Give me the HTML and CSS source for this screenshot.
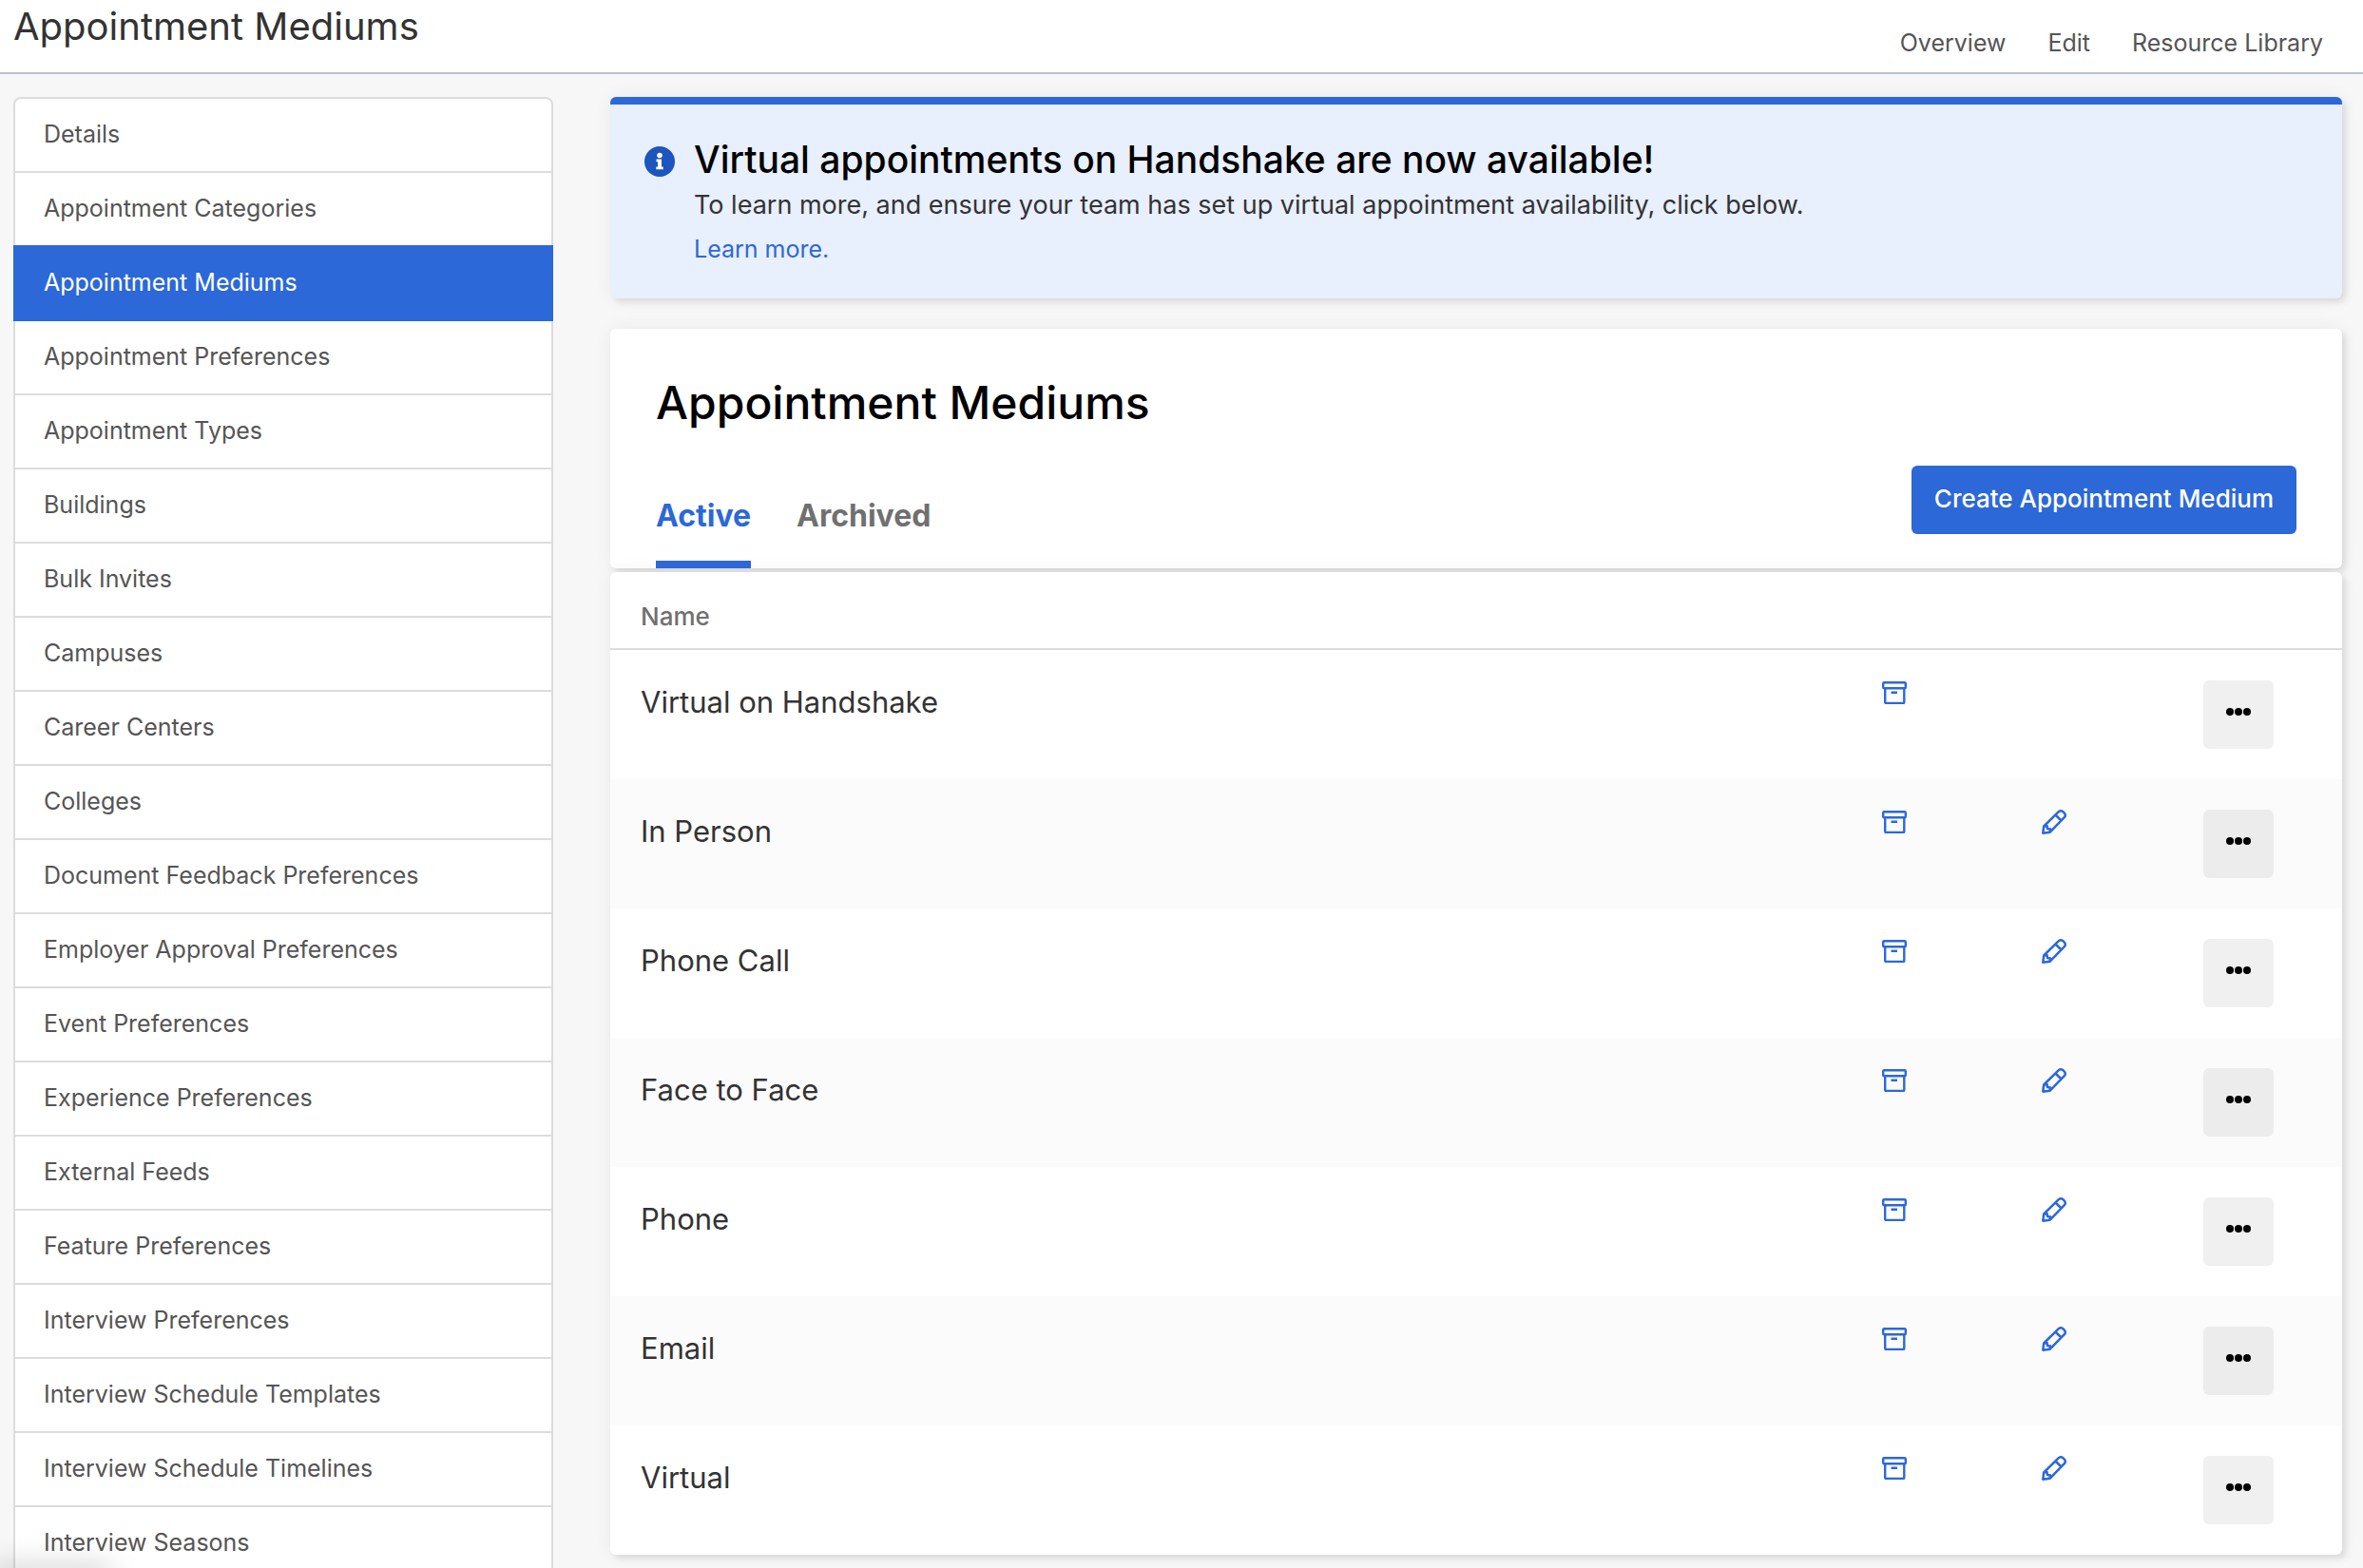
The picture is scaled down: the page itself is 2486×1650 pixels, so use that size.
FILE: index.html
```html
<!DOCTYPE html>
<html lang="en">
<head>
<meta charset="utf-8">
<title>Appointment Mediums</title>
<link rel="stylesheet" href="styles.css">
</head>
<body>
<svg class="sprite" aria-hidden="true">
  <symbol id="archive" viewBox="0 0 26 24">
    <g stroke-width="2.400">
      <rect x="1.200" y="1.200" width="23.600" height="6" rx="1"/>
      <path d="M3.200 7V22a1 1 0 0 0 1 1H22.300a1 1 0 0 0 1-1V7M9.500 11.800H16"/>
    </g>
  </symbol>
  <symbol id="pencil" viewBox="0 0 26 26">
    <path stroke-width="2.500" d="M1.300 24.700 2.200 17.500 17.800 2.200a3.200 3.200 0 0 1 4.600 0L23.800 3.600a3.200 3.200 0 0 1 0 4.600L8.500 23.800ZM14.500 5.500 20.500 11.500M2.500 17.500 5.500 17 6 20 9 20.500 8.500 23.500"/>
  </symbol>
  <symbol id="dots" viewBox="0 0 26 8">
    <circle cx="4" cy="4" r="4"/><circle cx="13" cy="4" r="4"/><circle cx="22" cy="4" r="4"/>
  </symbol>
</svg>

<header class="topbar">
  <h1 class="topbar-title">Appointment Mediums</h1>
  <nav class="topbar-nav" aria-label="Page">
    <a href="#overview">Overview</a>
    <a href="#edit">Edit</a>
    <a href="#library">Resource Library</a>
  </nav>
</header>

<div class="layout">
  <nav class="sidebar" aria-label="Settings">
    <a href="#">Details</a>
    <a href="#">Appointment Categories</a>
    <a href="#" class="active" aria-current="page">Appointment Mediums</a>
    <a href="#">Appointment Preferences</a>
    <a href="#">Appointment Types</a>
    <a href="#">Buildings</a>
    <a href="#">Bulk Invites</a>
    <a href="#">Campuses</a>
    <a href="#">Career Centers</a>
    <a href="#">Colleges</a>
    <a href="#">Document Feedback Preferences</a>
    <a href="#">Employer Approval Preferences</a>
    <a href="#">Event Preferences</a>
    <a href="#">Experience Preferences</a>
    <a href="#">External Feeds</a>
    <a href="#">Feature Preferences</a>
    <a href="#">Interview Preferences</a>
    <a href="#">Interview Schedule Templates</a>
    <a href="#">Interview Schedule Timelines</a>
    <a href="#">Interview Seasons</a>
  </nav>

  <main class="main">
    <section class="notice card">
      <svg class="notice-icon" viewBox="0 0 32 32" aria-hidden="true">
        <circle cx="16" cy="16" r="16" fill="#1d54bd"/>
        <circle cx="16" cy="9.500" r="2.800" fill="#fff"/>
        <path d="M12.500 13.500H18V21.500H19.700V24.200H12.300V21.500H14V16.200H12.500Z" fill="#fff"/>
      </svg>
      <div>
        <h2 class="notice-title">Virtual appointments on Handshake are now available!</h2>
        <p class="notice-text">To learn more, and ensure your team has set up virtual appointment availability, click below.</p>
        <a class="notice-link" href="#learn">Learn more.</a>
      </div>
    </section>

    <section class="panel card">
      <h2 class="panel-title">Appointment Mediums</h2>
      <div class="panel-bar">
        <div class="tabs" role="tablist">
          <button class="tab tab-active" type="button" role="tab" aria-selected="true">Active</button>
          <button class="tab" type="button" role="tab" aria-selected="false">Archived</button>
        </div>
        <button class="create" type="button">Create Appointment Medium</button>
      </div>
    </section>

    <section class="card">
      <table class="mediums">
        <colgroup><col><col class="col-archive"><col class="col-edit"><col class="col-more"></colgroup>
        <thead>
          <tr><th scope="col">Name</th><th></th><th></th><th></th></tr>
        </thead>
        <tbody>
          <tr>
            <td class="name">Virtual on Handshake</td>
            <td><a class="icon" href="#" aria-label="Archive"><svg class="archive"><use href="#archive"/></svg></a></td>
            <td></td>
            <td><button class="more" type="button" aria-label="More"><svg class="dots"><use href="#dots"/></svg></button></td>
          </tr>
          <tr>
            <td class="name">In Person</td>
            <td><a class="icon" href="#" aria-label="Archive"><svg class="archive"><use href="#archive"/></svg></a></td>
            <td><a class="icon" href="#" aria-label="Edit"><svg class="pencil"><use href="#pencil"/></svg></a></td>
            <td><button class="more" type="button" aria-label="More"><svg class="dots"><use href="#dots"/></svg></button></td>
          </tr>
          <tr>
            <td class="name">Phone Call</td>
            <td><a class="icon" href="#" aria-label="Archive"><svg class="archive"><use href="#archive"/></svg></a></td>
            <td><a class="icon" href="#" aria-label="Edit"><svg class="pencil"><use href="#pencil"/></svg></a></td>
            <td><button class="more" type="button" aria-label="More"><svg class="dots"><use href="#dots"/></svg></button></td>
          </tr>
          <tr>
            <td class="name">Face to Face</td>
            <td><a class="icon" href="#" aria-label="Archive"><svg class="archive"><use href="#archive"/></svg></a></td>
            <td><a class="icon" href="#" aria-label="Edit"><svg class="pencil"><use href="#pencil"/></svg></a></td>
            <td><button class="more" type="button" aria-label="More"><svg class="dots"><use href="#dots"/></svg></button></td>
          </tr>
          <tr>
            <td class="name">Phone</td>
            <td><a class="icon" href="#" aria-label="Archive"><svg class="archive"><use href="#archive"/></svg></a></td>
            <td><a class="icon" href="#" aria-label="Edit"><svg class="pencil"><use href="#pencil"/></svg></a></td>
            <td><button class="more" type="button" aria-label="More"><svg class="dots"><use href="#dots"/></svg></button></td>
          </tr>
          <tr>
            <td class="name">Email</td>
            <td><a class="icon" href="#" aria-label="Archive"><svg class="archive"><use href="#archive"/></svg></a></td>
            <td><a class="icon" href="#" aria-label="Edit"><svg class="pencil"><use href="#pencil"/></svg></a></td>
            <td><button class="more" type="button" aria-label="More"><svg class="dots"><use href="#dots"/></svg></button></td>
          </tr>
          <tr>
            <td class="name">Virtual</td>
            <td><a class="icon" href="#" aria-label="Archive"><svg class="archive"><use href="#archive"/></svg></a></td>
            <td><a class="icon" href="#" aria-label="Edit"><svg class="pencil"><use href="#pencil"/></svg></a></td>
            <td><button class="more" type="button" aria-label="More"><svg class="dots"><use href="#dots"/></svg></button></td>
          </tr>
        </tbody>
      </table>
    </section>
  </main>
</div>
<div class="status-shadow" aria-hidden="true"></div>
</body>
</html>
```

FILE: styles.css
```css
:root {
  --blue: #2c68d8;
  --line: #dcdcdc;
  --muted: #555;
}

* { box-sizing: border-box; }

body {
  margin: 0;
  height: 100vh;
  overflow: hidden;
  background: #f7f7f7;
  color: #333;
  font-family: Inter, "Liberation Sans", Arial, sans-serif;
  font-size: 25px;
  line-height: 40px;
}

h1, h2, p { margin: 0; }
a { color: inherit; text-decoration: none; }
button { border: 0; font: inherit; cursor: pointer; }
.sprite { display: none; }

.topbar {
  display: flex;
  justify-content: space-between;
  align-items: flex-start;
  padding: 0 42px 0 14px;
  background: #fff;
  border-bottom: 2px solid #b9c3cb;
}
.topbar-title { font-size: 40px; font-weight: 400; line-height: 56px; }
.topbar-nav {
  display: flex;
  gap: 44px;
  padding: 25px 0 11px;
  color: var(--muted);
}

.layout {
  display: grid;
  grid-template-columns: 284fr 911fr;
  gap: 60px;
  align-items: start;
  padding: 24px 22px 24px 14px;
}

.sidebar { display: flex; flex-direction: column; color: var(--muted); }
.sidebar a {
  padding: 17px 30px 19px;
  border: 2px solid var(--line);
  background: #fff;
}
.sidebar a + a { margin-top: -2px; }
.sidebar a:first-child { border-radius: 8px 8px 0 0; }
.sidebar .active {
  z-index: 1;
  background: var(--blue);
  border-color: var(--blue);
  color: #fff;
}

.card {
  border-radius: 6px;
  background: #fff;
  box-shadow: 4px 4px 6px rgba(0, 0, 0, .09), 0 0 20px rgba(0, 0, 0, .06);
}

.notice {
  display: flex;
  gap: 20px;
  margin-bottom: 32px;
  padding: 34px 36px 30px;
  border-top: 8px solid var(--blue);
  background: #e8effd;
}
.notice-icon { flex: none; width: 32px; height: 32px; margin-top: 10px; }
.notice-title { color: #000; font-size: 39px; font-weight: 500; line-height: 48px; }
.notice-text { font-size: 27px; line-height: 48px; }
.notice-link { display: block; color: var(--blue); line-height: 44px; }

.panel { margin-bottom: 4px; padding: 48px 48px 0; }
.panel-title { color: #000; font-size: 48px; font-weight: 500; line-height: 60px; }
.panel-bar {
  display: flex;
  justify-content: space-between;
  align-items: flex-start;
  padding-top: 36px;
}
.tabs { display: flex; gap: 48px; }
.tab {
  padding: 33px 0 27px;
  border-bottom: 8px solid transparent;
  background: none;
  color: #707070;
  font-size: 32px;
  font-weight: 700;
}
.tab-active { color: var(--blue); border-color: var(--blue); }
.create {
  padding: 15px 24px 17px;
  border-radius: 6px;
  background: var(--blue);
  color: #fff;
  font-size: 26px;
  font-weight: 500;
}

.mediums { width: 100%; border-collapse: separate; border-spacing: 0; table-layout: fixed; }
.col-archive { width: 168px; }
.col-edit { width: 170px; }
.col-more { width: 178px; }
.mediums th {
  padding: 27px 32px 13px;
  border-bottom: 2px solid var(--line);
  color: #707070;
  font-size: 26px;
  font-weight: 500;
  text-align: left;
}
.mediums td { padding: 32px; vertical-align: top; }
.mediums .name { font-size: 31px; line-height: 46px; }
.mediums tbody tr:nth-child(even) { background: #fbfbfb; }

.icon { display: flex; align-items: center; height: 26px; color: var(--blue); }
.icon svg { fill: none; stroke: currentColor; stroke-linejoin: round; }
.archive { width: 26px; height: 24px; }
.pencil { width: 26px; height: 26px; }
.more {
  display: flex;
  justify-content: center;
  width: 74px;
  height: 72px;
  padding: 29px 0 0;
  border-radius: 6px;
  background: rgba(0, 0, 0, .06);
}
.dots { width: 26px; height: 8px; fill: #000; }

/* Soft edge of the browser's status bubble */
.status-shadow {
  position: fixed;
  left: 0;
  bottom: 0;
  width: 110px;
  height: 0;
  box-shadow: 0 6px 30px 6px rgba(0, 0, 0, .3);
}
```
